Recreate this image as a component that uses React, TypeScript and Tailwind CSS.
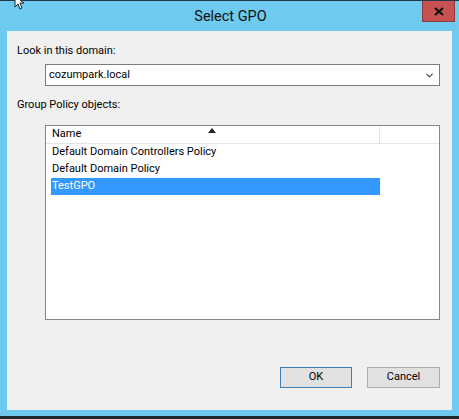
import { ChevronDown } from "lucide-react";

const rows = ["Default Domain Controllers Policy", "Default Domain Policy", "TestGPO"];

export default function App() {
  const selected = 2;

  return (
    <div
      className="relative w-[459px] h-[419px] bg-[#6ecbef] flex flex-col overflow-hidden text-[11px] text-black"
      style={{ fontFamily: 'Roboto, "Noto Sans", sans-serif' }}
    >
      {/* title bar */}
      <div className="relative h-[31px] shrink-0 border-t border-[#1f3a4a] flex items-center justify-center">
        <span className="text-[14.5px] text-[#111] mt-[1px] ml-[2px]">Select GPO</span>
        <button className="absolute right-[4px] top-0 w-[33px] h-[21px] bg-[#c75050] border border-[#8b3a3a] border-t-0 flex items-center justify-center">
          <svg width="10" height="9" viewBox="0 0 10 9">
            <path d="M1 1 L9 8 M9 1 L1 8" stroke="#111" strokeWidth="2.2" />
          </svg>
        </button>
      </div>

      {/* mouse cursor */}
      <svg className="absolute left-[14px] top-[-4px]" width="12" height="14" viewBox="0 0 12 14">
        <path d="M1 0 L1 11 L4 8 L6 13 L8 12 L6 7 L10 7 Z" fill="#fff" stroke="#222" strokeWidth="1" />
      </svg>

      {/* dialog body */}
      <div className="mx-[7px] h-[379px] bg-[#f0f0f0] flex flex-col px-[10px] pt-[12px]">
        <div className="leading-[16px]">Look in this domain:</div>
        <div className="ml-[28px] mr-[2px] mt-[5px] h-[22px] bg-white border border-[#7a7a7a] flex items-center justify-between pl-[3px] pr-[4px]">
          <span>cozumpark.local</span>
          <ChevronDown className="w-[11px] h-[11px] text-[#555]" strokeWidth={3} />
        </div>

        <div className="mt-[11px] leading-[16px]">Group Policy objects:</div>

        <div className="ml-[28px] mr-[2px] mt-[12px] h-[195px] bg-white border border-[#828790] flex flex-col">
          <div className="h-[18px] flex border-b border-[#e5e5e5] shrink-0">
            <div className="relative w-[334px] border-r border-[#e5e5e5] pl-[6px] flex items-center">
              <span>Name</span>
              <svg className="absolute left-[162px] top-[2px]" width="8" height="5" viewBox="0 0 8 5">
                <path d="M0 5 L4 0 L8 5 Z" fill="#222" />
              </svg>
            </div>
            <div className="flex-1" />
          </div>
          {rows.map((name, i) => (
            <div
              key={name}
              className={`w-[329px] h-[17px] ml-[5px] pl-[1px] flex items-center ${
                i === selected ? "bg-[#3399ff] text-white" : ""
              }`}
            >
              {name}
            </div>
          ))}
        </div>

        <div className="mt-auto mb-[22px] flex justify-end gap-[15px] pr-[2px]">
          <button className="w-[72px] h-[21px] bg-[#e1e1e1] border border-[#3c7fb1]">OK</button>
          <button className="w-[73px] h-[21px] bg-[#e1e1e1] border border-[#adadad]">Cancel</button>
        </div>
      </div>

      <div className="mt-auto h-[3px] bg-[#1f2a30]" />
    </div>
  );
}
